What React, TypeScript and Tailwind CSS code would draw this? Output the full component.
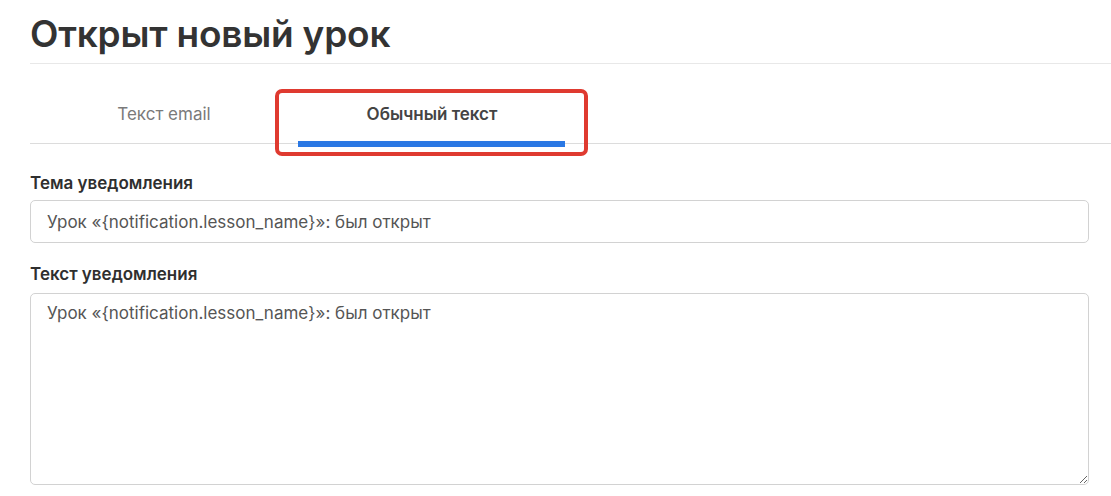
import { useState } from "react";

const TABS = ["Текст email", "Обычный текст"];
const TEMPLATE = "Урок «{notification.lesson_name}»: был открыт";

const App = () => {
  const [active, setActive] = useState(1);
  const [subject, setSubject] = useState(TEMPLATE);
  const [body, setBody] = useState(TEMPLATE);

  return (
    <div className="min-h-screen bg-white font-['Inter','Noto_Sans',sans-serif] text-[#333]">
      <div className="pl-[30px]">
        {/* Header */}
        <h1 className="pt-[13px] pb-[8px] text-[37px] font-semibold leading-[42px] tracking-[-0.2px] text-[#333] border-b border-[#e8e8e8]">
          Открыт новый урок
        </h1>

        {/* Tabs */}
        <div className="relative flex h-[80px] border-b border-[#dcdcdc]">
          {TABS.map((tab, i) => (
            <button
              key={tab}
              onClick={() => setActive(i)}
              className={`relative flex w-[268px] items-center justify-center pt-[22px] text-[17px] ${
                active === i ? "font-semibold text-[#444]" : "text-[#7a7a7a]"
              }`}
            >
              {tab}
              {active === i && (
                <span className="absolute left-0 right-[1px] bottom-[-4px] h-[6px] bg-[#2a78e4]" />
              )}
            </button>
          ))}
          {/* highlight frame */}
          <div className="pointer-events-none absolute left-[245px] top-[25px] h-[67px] w-[313px] rounded-[7px] border-[4px] border-[#df3a30]" />
        </div>

        {/* Form */}
        <div className="pr-[22px] pt-[29px]">
          <label className="block text-[17px] font-semibold leading-[20px] text-[#2f2f2f]">
            Тема уведомления
          </label>
          <input
            value={subject}
            onChange={(e) => setSubject(e.target.value)}
            className="mt-[7px] block h-[43px] w-full rounded-[5px] border border-[#d2d2d2] px-[16px] text-[17px] text-[#555] outline-none"
          />

          <label className="mt-[21px] block text-[17px] font-semibold leading-[20px] text-[#2f2f2f]">
            Текст уведомления
          </label>
          <textarea
            value={body}
            onChange={(e) => setBody(e.target.value)}
            className="mt-[9px] block h-[192px] w-full rounded-[5px] border border-[#d2d2d2] px-[16px] py-[7px] text-[17px] leading-[24px] text-[#555] outline-none"
          />
        </div>
      </div>
    </div>
  );
};

export default App;
